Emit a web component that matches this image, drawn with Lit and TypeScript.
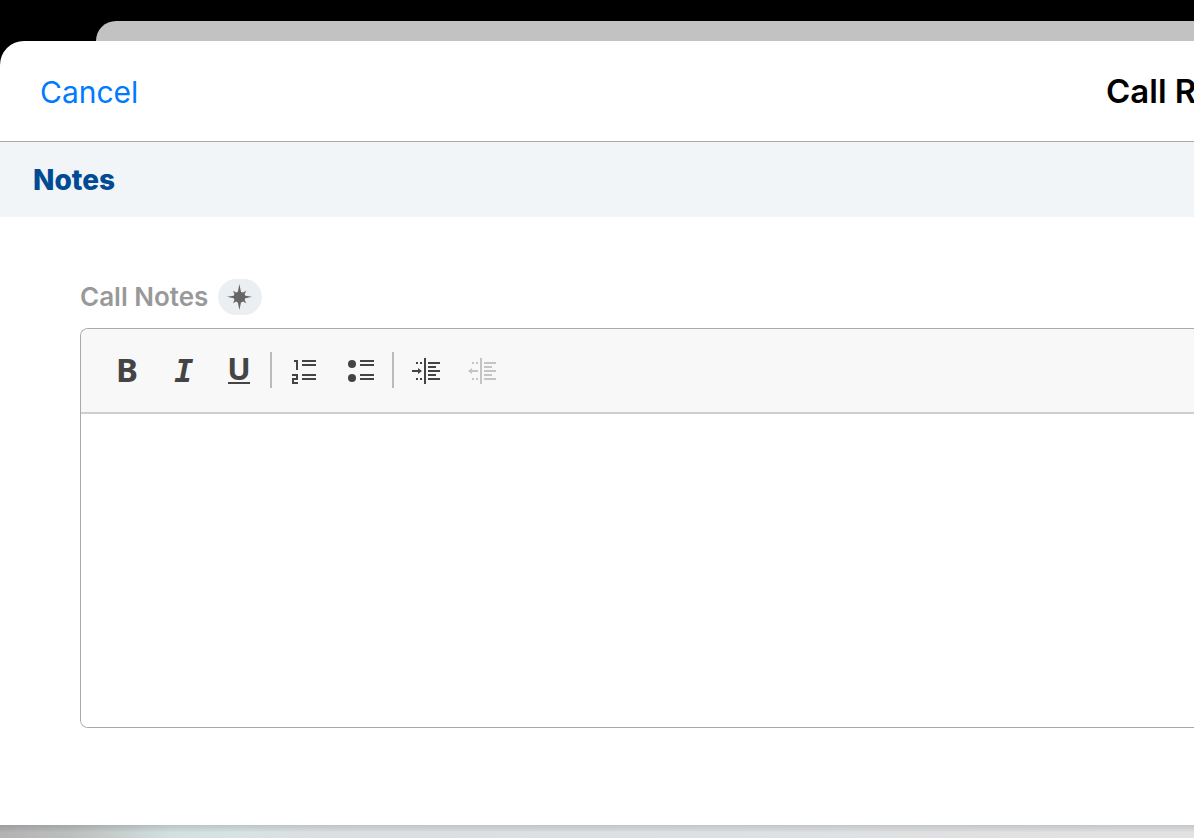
import { LitElement, html, css, svg } from "lit";
import { customElement } from "lit/decorators.js";

const lines = (x: number, w: number) =>
  [6, 10, 20, 24].map((y) => svg`<rect x=${x} y=${y} width=${w} height="2" />`);

const indentBody = svg`
  <rect x="14" y="4" width="2" height="26" />
  <path d="M18 8h12v2H18zM18 12h8v2h-8zM18 16h12v2H18zM18 20h8v2h-8zM18 24h12v2H18z" />
  <path d="M6 8h2v2H6zM10 8h2v2h-2zM6 24h2v2H6zM10 24h2v2h-2z" />
`;

@customElement("editor-toolbar")
export class EditorToolbar extends LitElement {
  static styles = css`
    :host {
      display: flex;
      align-items: center;
      padding: 13px 17px 14px;
      background: #f8f8f8;
      border-bottom: 2px solid #cfcfcf;
    }
    .tool {
      display: grid;
      place-items: center;
      width: 56px;
      height: 56px;
      padding: 0;
      border: 0;
      background: none;
      color: #444;
    }
    .tool:disabled {
      color: #c4c4c4;
    }
    .icon {
      display: block;
      width: 32px;
      height: 32px;
      overflow: visible;
      fill: currentColor;
      shape-rendering: crispEdges;
    }
    .round {
      shape-rendering: auto;
    }
    .letter {
      font: 700 33px "Noto Sans", sans-serif;
    }
    .underlined {
      font: 700 31px "Noto Sans", sans-serif;
    }
    .slab {
      font: italic 700 32px "DejaVu Sans Mono", monospace;
    }
    .separator {
      width: 2px;
      height: 36px;
      margin: 0 4px;
      background: #bbb;
    }
  `;

  render() {
    return html`
      <button class="tool" aria-label="Bold">
        <svg class="icon" viewBox="0 0 32 32"><text class="letter" x="17" y="28" text-anchor="middle">B</text></svg>
      </button>
      <button class="tool" aria-label="Italic">
        <svg class="icon" viewBox="0 0 32 32"><text class="slab" x="18" y="28" text-anchor="middle">I</text></svg>
      </button>
      <button class="tool" aria-label="Underline">
        <svg class="icon" viewBox="0 0 32 32">
          <text class="underlined" x="17" y="26" text-anchor="middle">U</text>
          <rect x="6" y="28" width="22" height="2" />
        </svg>
      </button>
      <span class="separator"></span>
      <button class="tool" aria-label="Numbered list">
        <svg class="icon" viewBox="0 0 32 32">
          <path d="M6 6h4v10H8V8H6z" />
          <path d="M4 20h6v6H6v2h4v2H4v-6h4v-2H4z" />
          ${lines(14, 14)}
        </svg>
      </button>
      <button class="tool" aria-label="Bulleted list">
        <svg class="icon" viewBox="0 0 32 32">
          <circle class="round" cx="8" cy="10" r="4" />
          <circle class="round" cx="8" cy="24" r="4" />
          ${lines(16, 14)}
        </svg>
      </button>
      <span class="separator"></span>
      <button class="tool" aria-label="Increase indent">
        <svg class="icon" viewBox="0 0 32 32">
          ${indentBody}
          <path class="round" d="M2 16h6v-2l4 3-4 3v-2H2z" />
        </svg>
      </button>
      <button class="tool" aria-label="Decrease indent" disabled>
        <svg class="icon" viewBox="0 0 32 32">
          ${indentBody}
          <path class="round" d="M12 16H6v-2l-4 3 4 3v-2h6z" />
        </svg>
      </button>
    `;
  }
}

@customElement("app-root")
export class AppRoot extends LitElement {
  static styles = css`
    :host {
      display: flex;
      flex-direction: column;
      box-sizing: border-box;
      min-height: 100vh;
      padding-top: 21px;
      overflow: hidden;
      background: #000;
      font-family: Inter, sans-serif;
    }
    .back-sheet {
      height: 20px;
      margin-left: 96px;
      border-top-left-radius: 20px;
      background: #c2c2c2;
    }
    .sheet {
      flex: 1;
      display: flex;
      flex-direction: column;
      border-top-left-radius: 24px;
      background: #fff;
    }
    .bar {
      display: flex;
      align-items: center;
      justify-content: space-between;
      height: 100px;
      padding-left: 40px;
      border-bottom: 1px solid #a9abad;
    }
    .cancel {
      padding: 2px 0 0;
      border: 0;
      background: none;
      color: #007aff;
      font: 400 30px/40px Inter, sans-serif;
    }
    .title {
      width: 88px;
      margin: 0;
      overflow: hidden;
      white-space: nowrap;
      color: #000;
      font-size: 33px;
      font-weight: 600;
      line-height: 40px;
    }
    .section {
      margin: 0;
      padding: 18px 33px 17px;
      background: #f1f5f8;
      color: #004b93;
      font-size: 28px;
      font-weight: 800;
      line-height: 40px;
    }
    .content {
      flex: 1;
      display: flex;
      flex-direction: column;
      padding: 62px 0 97px 80px;
    }
    .field {
      display: flex;
      align-items: center;
      gap: 10px;
      margin-bottom: 13px;
    }
    .label {
      color: #999;
      font-size: 26px;
      font-weight: 600;
      line-height: 36px;
    }
    .badge {
      display: grid;
      place-items: center;
      width: 44px;
      height: 36px;
      border-radius: 18px;
      background: #ebeff2;
    }
    .star {
      display: block;
      width: 28px;
      height: 28px;
      fill: #666;
    }
    .editor {
      flex: 1;
      display: flex;
      flex-direction: column;
      border: 1px solid #aaa;
      border-right: 0;
      border-radius: 8px 0 0 8px;
      overflow: hidden;
    }
    .input {
      flex: 1;
      display: block;
      box-sizing: border-box;
      width: 100%;
      min-height: 200px;
      padding: 20px;
      border: 0;
      outline: 0;
      resize: none;
      background: #fff;
      font: 400 28px/36px Inter, sans-serif;
    }
    .backdrop {
      height: 13px;
      background:
        linear-gradient(rgba(0, 0, 0, 0.12), rgba(0, 0, 0, 0.03) 6px, transparent 7px),
        linear-gradient(90deg, #b2b2b4, #bcbfbf 70px, #d2e0df 170px, #d6e3e2 230px, #dcdfe1 330px, #e0e2e4);
    }
  `;

  render() {
    return html`
      <div class="back-sheet"></div>
      <main class="sheet">
        <header class="bar">
          <button class="cancel">Cancel</button>
          <h1 class="title">Call R</h1>
        </header>
        <h2 class="section">Notes</h2>
        <div class="content">
          <div class="field">
            <label class="label" for="notes">Call Notes</label>
            <span class="badge">
              <svg class="star" viewBox="-14 -14 28 28">
                <path d="M-.6-13L1-5L3-4.4L6.4-6.2L4.6-3L5.4-1.2L12-.2L5.4 1.2L4.6 3L6.4 6.2L3 4.4L1 5.4L-.6 13L-2.2 5.4L-4 4.4L-7 6.2L-5.6 3L-6.2 1.2L-13-.2L-6.2-1.2L-5.6-3L-7-6.2L-4-4.4L-2.2-5Z" />
              </svg>
            </span>
          </div>
          <div class="editor">
            <editor-toolbar></editor-toolbar>
            <textarea class="input" id="notes"></textarea>
          </div>
        </div>
      </main>
      <div class="backdrop"></div>
    `;
  }
}
